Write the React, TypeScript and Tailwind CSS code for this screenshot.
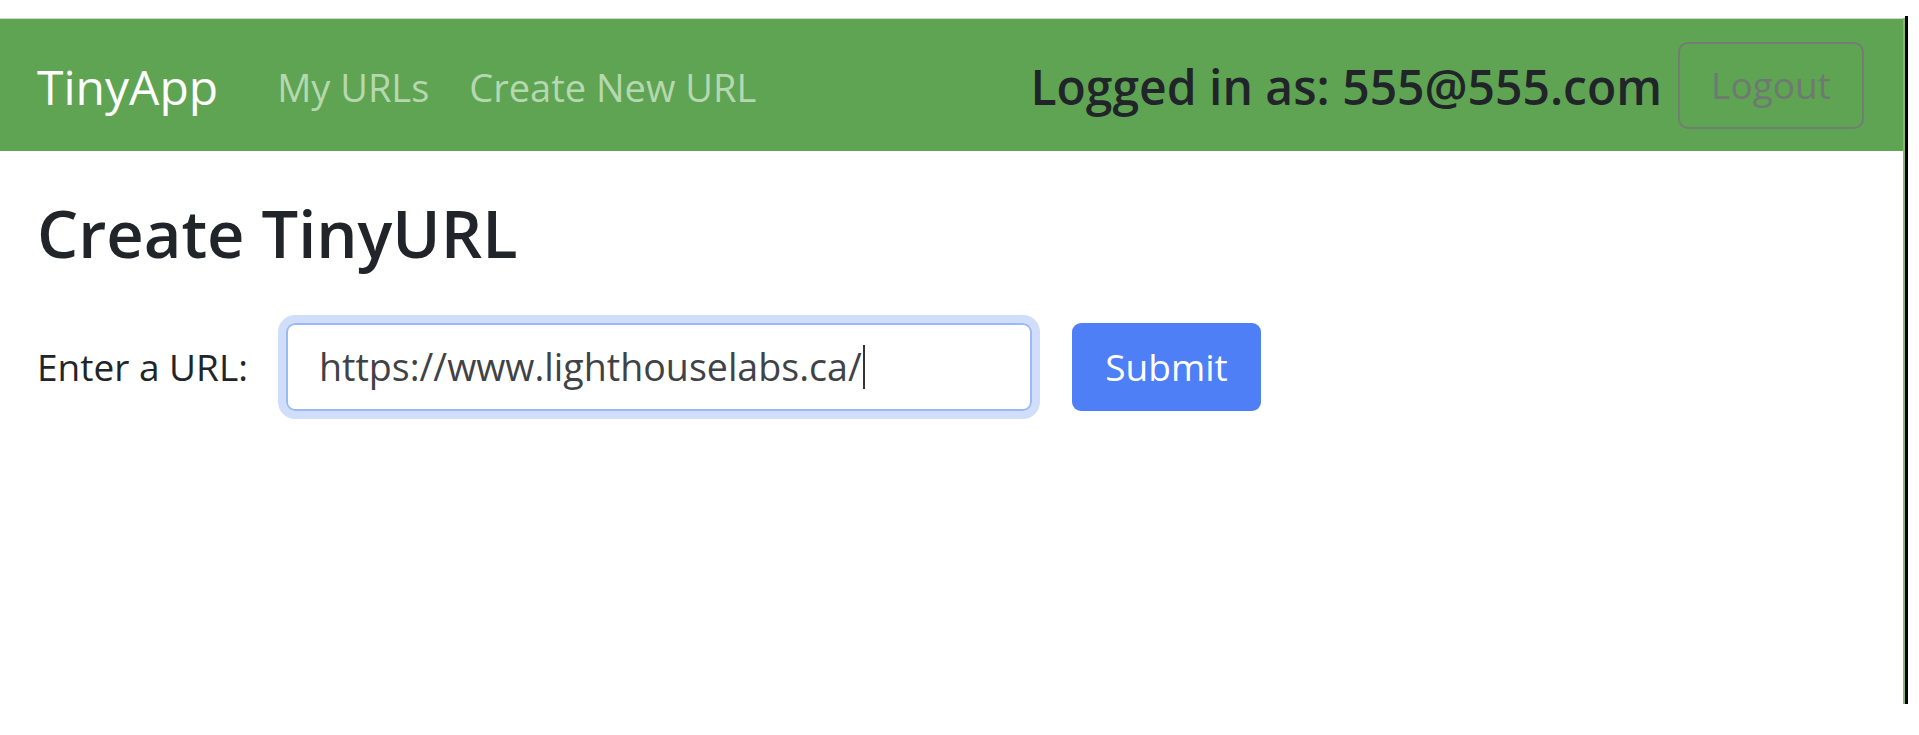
import React from 'react';

const font = { fontFamily: '"Open Sans", "Noto Sans", sans-serif' };

const Navbar: React.FC = () => {
  return (
    <nav className="flex h-[133px] items-center justify-between bg-[#5fa453] pl-[37px] pr-[39px] border-t border-[#cfd6cd]">
      <div className="flex items-center pt-[3px]">
        <a className="text-[48px] text-white leading-none mr-[59px]">TinyApp</a>
        <a className="text-[38px] text-[#b6d8b0] leading-none mr-[40px]">My URLs</a>
        <a className="text-[38px] text-[#b6d8b0] leading-none">Create New URL</a>
      </div>
      <div className="flex items-center">
        <span className="text-[48px] font-semibold text-[#212529] leading-none mr-[16px] pt-[3px]">
          Logged in as: 555@555.com
        </span>
        <button className="h-[87px] w-[186px] rounded-[10px] border-2 border-[#727d74] text-[37px] text-[#6e7a71]">
          Logout
        </button>
      </div>
    </nav>
  );
};

const App: React.FC = () => {
  return (
    <div className="h-[735px] w-[1919px] overflow-hidden bg-white" style={font}>
      <div className="mt-[16px] h-[688px] w-[1908px] border-r-[3px] border-black pt-[2px]">
        <div className="h-full border-r-2 border-[#86bb66]">
          <Navbar />
          <main className="px-[37px]">
            <h1 className="mt-[39px] text-[65px] font-semibold leading-[86px] text-[#212529]">
              Create TinyURL
            </h1>
            <form className="mt-[47px] flex items-center">
              <label className="text-[37px] text-[#212529] mr-[38px]">Enter a URL:</label>
              <div className="flex h-[88px] w-[746px] items-center rounded-[9px] border-2 border-[#9bbaf4] pl-[31px] text-[37.6px] text-[#3f4246] ring-[8px] ring-[#d0ddfb]">
                <span>https://www.lighthouselabs.ca/</span>
                <span className="ml-[1px] inline-block h-[44px] w-[2px] bg-[#333]" />
              </div>
              <button
                type="button"
                className="ml-[40px] h-[88px] w-[189px] rounded-[9px] bg-[#4e7ff6] text-[37px] text-white"
              >
                Submit
              </button>
            </form>
          </main>
        </div>
      </div>
    </div>
  );
};

export default App;
